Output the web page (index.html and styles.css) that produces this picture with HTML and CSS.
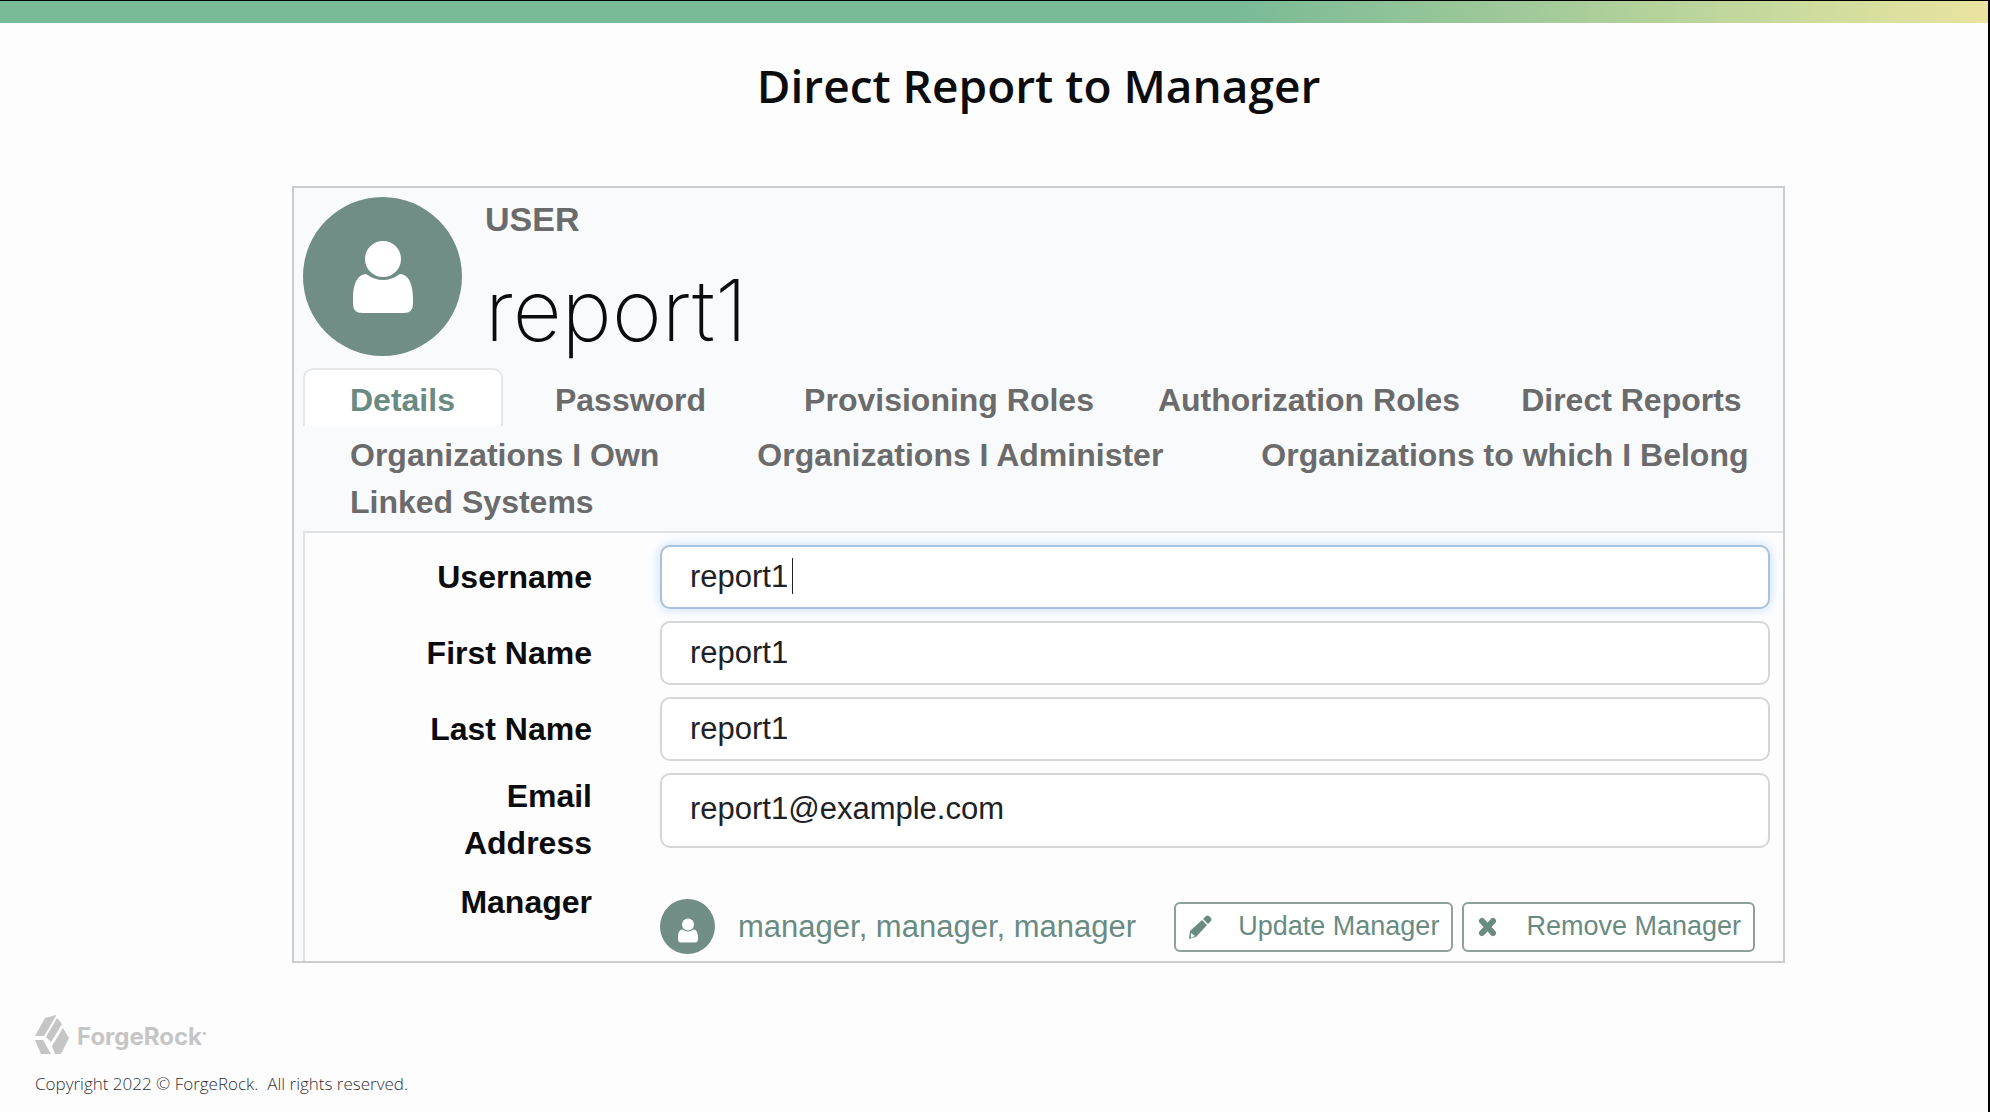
FILE: index.html
```
<!DOCTYPE html>
<html lang="en">
<head>
<meta charset="utf-8">
<title>Direct Report to Manager</title>
<link rel="stylesheet" href="styles.css">
</head>
<body>
<svg class="defs" aria-hidden="true"><symbol id="person" viewBox="0 0 60 72"><path d="M13 33C3 34 0 45 0 58v5q0 9 9 9h42q9 0 9-9v-5C60 45 57 34 47 33Q30 45 13 33z"/><circle cx="30" cy="18" r="18"/></symbol></svg>
<div class="slide">
  <div class="stripe"></div>
  <main class="content">
    <h1 class="title">Direct Report to Manager</h1>
    <section class="panel">
      <header class="head">
        <div class="identity">
          <span class="avatar"><svg><use href="#person"/></svg></span>
          <div>
            <p class="kind">USER</p>
            <h2 class="name">report1</h2>
          </div>
        </div>
        <nav class="tabs">
          <div class="row first">
            <a class="tab active" href="#details">Details</a>
            <a class="tab" href="#password">Password</a>
            <a class="tab" href="#provisioning">Provisioning Roles</a>
            <a class="tab narrow" href="#authorization">Authorization Roles</a>
            <a class="tab narrow" href="#reports">Direct Reports</a>
          </div>
          <div class="row">
            <a class="tab" href="#own">Organizations I Own</a>
            <a class="tab" href="#administer">Organizations I Administer</a>
            <a class="tab" href="#belong">Organizations to which I Belong</a>
          </div>
          <div class="row last">
            <a class="tab" href="#linked">Linked Systems</a>
          </div>
        </nav>
      </header>
      <form class="form" id="details">
        <div class="field">
          <label for="username">Username</label>
          <div class="focused"><input id="username" type="text" value="report1"><span class="caret"></span></div>
        </div>
        <div class="field"><label for="first">First Name</label><input id="first" type="text" value="report1"></div>
        <div class="field"><label for="last">Last Name</label><input id="last" type="text" value="report1"></div>
        <div class="field email"><label for="email">Email<br>Address</label><input id="email" type="text" value="report1@example.com"></div>
        <div class="field manager">
          <span class="label">Manager</span>
          <div class="actions">
            <span class="avatar small"><svg><use href="#person"/></svg></span>
            <a class="person" href="#manager">manager, manager, manager</a>
            <button class="btn" type="button"><svg viewBox="0 0 24 28"><path d="M1 26l1-8L14 7l5 5L8 24z"/><path d="M15 6l3-3q1-1 3 0l2 2q1 2 0 3l-3 3z"/><path class="cut" d="M3 20l4 3-4 2z"/></svg>Update Manager</button>
            <button class="btn" type="button"><svg viewBox="0 0 24 28"><path class="cross" d="M6 8l11 12M17 8L6 20"/></svg>Remove Manager</button>
          </div>
        </div>
      </form>
    </section>
  </main>
  <footer class="footer">
    <div class="brand">
      <svg viewBox="0 0 34 39"><path d="M21 0L10 3 0 21h9L21 1zM22 3l5 6-11 18-5-5zM28 13l6 10-8 16h-6l-3-8zM0 25h8l8 14H6z"/></svg>
      <span>ForgeRock<sup>•</sup></span>
    </div>
    <p class="copy">Copyright 2022 © ForgeRock.&nbsp; All rights reserved.</p>
  </footer>
</div>
</body>
</html>
```

FILE: styles.css
```
* { box-sizing: border-box; }
body, h1, h2, p { margin: 0; }
body { background: #fdfdfe; color: #0c0c0e; font-family: "Liberation Sans", Arial, sans-serif; }
.defs { position: absolute; width: 0; height: 0; }
.slide { min-height: 100vh; display: flex; flex-direction: column; border-top: 1px solid #000; border-right: 2px solid #000; }
.stripe { height: 22px; background: linear-gradient(90deg, #79ba97 0%, #79ba97 62%, #a4cb99 78%, #cddc9e 91%, #ebe3a0 100%); }
.content { padding: 30px 203px 0 292px; }
.title { font: 600 46px/64px "Open Sans", sans-serif; text-align: center; margin-bottom: 69px; }
.panel { border: 2px solid #cbcccd; background: #f9fafc; padding-left: 9px; }
.identity { display: flex; gap: 23px; padding-top: 9px; }
.avatar { flex: none; width: 159px; height: 159px; border-radius: 50%; background: #708d86; fill: #fff; display: flex; align-items: center; justify-content: center; }
.avatar svg { width: 60px; height: 72px; }
.avatar.small { width: 55px; height: 55px; padding-top: 8px; }
.avatar.small svg { width: 20px; height: 25px; }
.kind { font-size: 34px; line-height: 38px; font-weight: 700; color: #6b6b6c; padding-top: 3px; }
.name { font: 200 85px/94px Inter, sans-serif; padding-top: 26px; }
.tabs { margin-top: 10px; }
.row { display: flex; height: 47px; line-height: 47px; }
.row.first { height: 58px; line-height: 64px; margin-bottom: 6px; }
.row.last { height: 52px; }
.tab { padding: 0 51px 0 47px; font-size: 32px; font-weight: 700; color: #6b6b6c; text-decoration: none; white-space: nowrap; }
.tab.active { color: #6a8b82; background: #fff; border: 2px solid #e6e7e9; border-bottom: 0; border-radius: 10px 10px 0 0; padding: 0 46px 0 45px; margin-right: 5px; line-height: 60px; }
.tab.narrow { padding: 0 48px 0 13px; }
.form { border: solid #e0e1e2; border-width: 2px 0 0 2px; background: #fdfdfe; padding: 12px 13px 7px 0; display: grid; gap: 12px; }
.field { display: grid; grid-template-columns: 287px 1fr; column-gap: 68px; align-items: center; }
.field label, .label { text-align: right; font-size: 32px; line-height: 47px; font-weight: 700; }
.field input { display: block; width: 100%; height: 64px; border: 2px solid #d5d6d8; border-radius: 10px; background: #fff; padding: 0 28px; font: 31px "Liberation Sans", Arial, sans-serif; color: #202124; }
.focused { position: relative; }
.focused input { outline: 0; border-color: #a9c1dc; box-shadow: 0 0 12px #c4dcf8; }
.caret { position: absolute; left: 132px; top: 13px; width: 1px; height: 36px; background: #202124; }
.email { align-items: start; }
.email input { height: 75px; padding-bottom: 4px; }
.manager .label { align-self: start; }
.actions { display: flex; align-items: center; gap: 9px; padding: 20px 15px 0 0; }
.person { flex: 1; margin-left: 14px; font-size: 31px; color: #6a8b82; text-decoration: none; }
.btn { display: flex; align-items: center; gap: 26px; height: 50px; padding: 0 12px; border: 2px solid #8f9f9c; border-radius: 6px; background: #fff; color: #6a8b82; font: 27px "Liberation Sans", Arial, sans-serif; white-space: nowrap; }
.btn svg { width: 24px; height: 28px; fill: #6a8b82; }
.btn .cut { fill: #fff; }
.btn .cross { stroke: #6a8b82; stroke-width: 6; stroke-linecap: round; }
.footer { margin-top: auto; padding: 0 0 16px 35px; }
.brand { display: flex; gap: 8px; align-items: center; color: #c5c5c6; font: 700 24px/38px Inter, sans-serif; }
.brand span { padding-top: 6px; }
.brand svg { width: 34px; height: 39px; fill: #c5c5c6; }
.brand sup { font-size: 10px; line-height: 0; }
.copy { margin-top: 16px; font: 300 17px/24px "Open Sans", sans-serif; color: #303032; }
```
